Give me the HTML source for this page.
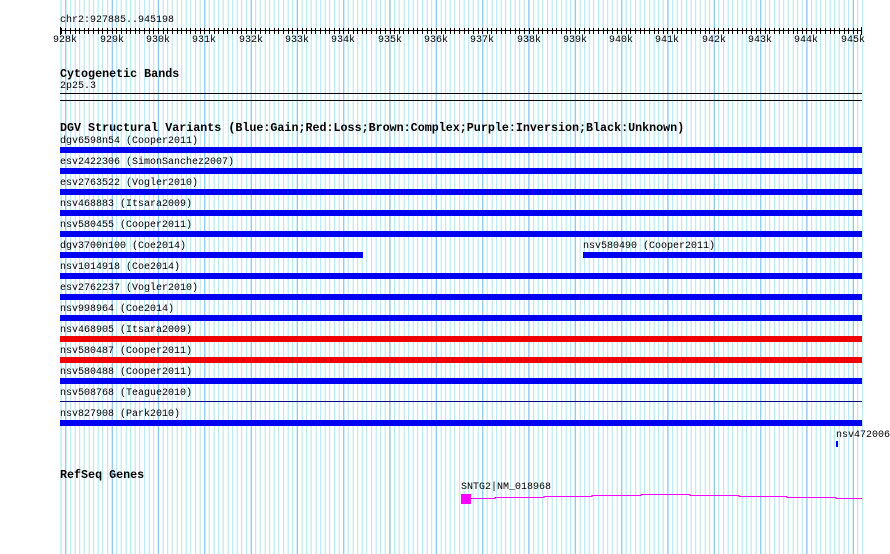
<!DOCTYPE html>
<html><head><style>
body{margin:0;width:890px;height:554px;overflow:hidden;background:#fff;position:relative;font-family:"Liberation Mono",monospace;font-size:10px;color:#000}
.g{position:absolute;left:60px;top:0;width:803px;height:554px;
background:repeating-linear-gradient(90deg,#7fbfee 0,#7fbfee 1px,transparent 1px,transparent 46.32px),repeating-linear-gradient(90deg,#aee6ee 0,#aee6ee 1px,transparent 1px,transparent 4.632px);
background-position:5.3px 0,0.7px 0}
.t{position:absolute;line-height:10px;white-space:pre}
.b{font-weight:bold;font-size:11.7px;line-height:12px}
.bar{position:absolute;height:6px;background:#0000f0}
.r{background:#f00000}
.ln{position:absolute;height:1px;background:#000}
</style></head><body>
<div class="g"></div>
<div class="t" style="left:60px;top:16px">chr2:927885..945198</div>
<div class="ln" style="left:60px;top:30px;width:802px"></div>
<svg style="position:absolute;left:0;top:25px" width="890" height="12">
<g stroke="#000" stroke-width="1">
<line x1="60.5" y1="2" x2="60.5" y2="10"/><line x1="861.5" y1="2" x2="861.5" y2="10"/>
</g>
<g stroke="#000" id="tk"></g>
</svg>
<div id="lbl"></div>
<div class="t b" style="left:60px;top:68px">Cytogenetic Bands</div>
<div class="t" style="left:60px;top:82px">2p25.3</div>
<div class="ln" style="left:60px;top:93px;width:802px"></div>
<div class="ln" style="left:60px;top:100px;width:802px"></div>
<div class="t b" style="left:60px;top:122px">DGV Structural Variants (Blue:Gain;Red:Loss;Brown:Complex;Purple:Inversion;Black:Unknown)</div>
<div id="rows"></div>
<div class="t" style="left:836px;top:431px">nsv472006</div>
<div class="bar" style="left:836px;top:441px;width:2px"></div>
<div class="t b" style="left:60px;top:469px">RefSeq Genes</div>
<div class="t" style="left:461px;top:483px">SNTG2|NM_018968</div>
<div style="position:absolute;left:461px;top:494px;width:10px;height:10px;background:#f0f"></div>
<svg style="position:absolute;left:0;top:0" width="890" height="554"><polyline fill="none" stroke="#f0f" stroke-width="1" points="471,498.5 495,498.5 495,497.5 544,497.5 544,496.5 592,496.5 592,495.5 641,495.5 641,494.5 690,494.5 690,495.5 739,495.5 739,496.5 787,496.5 787,497.5 836,497.5 836,498.5 862,498.5"/></svg>
<script>
var s='';for(var i=0;i<=173;i++){var x=60.7+i*4.632;if(x>862)break;s+='<line x1="'+(Math.round(x)+.5)+'" y1="3" x2="'+(Math.round(x)+.5)+'" y2="9"/>';}
document.getElementById('tk').innerHTML=s;
var l='';for(var k=0;k<=17;k++){var x=65.3+k*46.32;l+='<div class="t" style="left:'+(Math.round(x)-12)+'px;top:36px;width:24px;text-align:center">'+(928+k)+'k</div>';}
document.getElementById('lbl').innerHTML=l;
var rows=[["dgv6598n54 (Cooper2011)",0],["esv2422306 (SimonSanchez2007)",0],["esv2763522 (Vogler2010)",0],["nsv468883 (Itsara2009)",0],["nsv580455 (Cooper2011)",0],["dgv3700n100 (Coe2014)",2],["nsv1014918 (Coe2014)",0],["esv2762237 (Vogler2010)",0],["nsv998964 (Coe2014)",0],["nsv468905 (Itsara2009)",1],["nsv580487 (Cooper2011)",1],["nsv580488 (Cooper2011)",0],["nsv508768 (Teague2010)",3],["nsv827908 (Park2010)",0]];
var h='';rows.forEach(function(r,i){var y=147+21*i;h+='<div class="t" style="left:60px;top:'+(y-10)+'px">'+r[0]+'</div>';
if(r[1]==2){h+='<div class="bar" style="left:60px;top:'+y+'px;width:303px"></div><div class="t" style="left:583px;top:'+(y-10)+'px">nsv580490 (Cooper2011)</div><div class="bar" style="left:583px;top:'+y+'px;width:279px"></div>';}
else if(r[1]==3){h+='<div class="bar" style="left:60px;top:'+(y+2)+'px;width:802px;height:1px;background:#000080"></div>';}
else h+='<div class="bar'+(r[1]==1?' r':'')+'" style="left:60px;top:'+y+'px;width:802px"></div>';});
document.getElementById('rows').innerHTML=h;
</script>
</body></html>
